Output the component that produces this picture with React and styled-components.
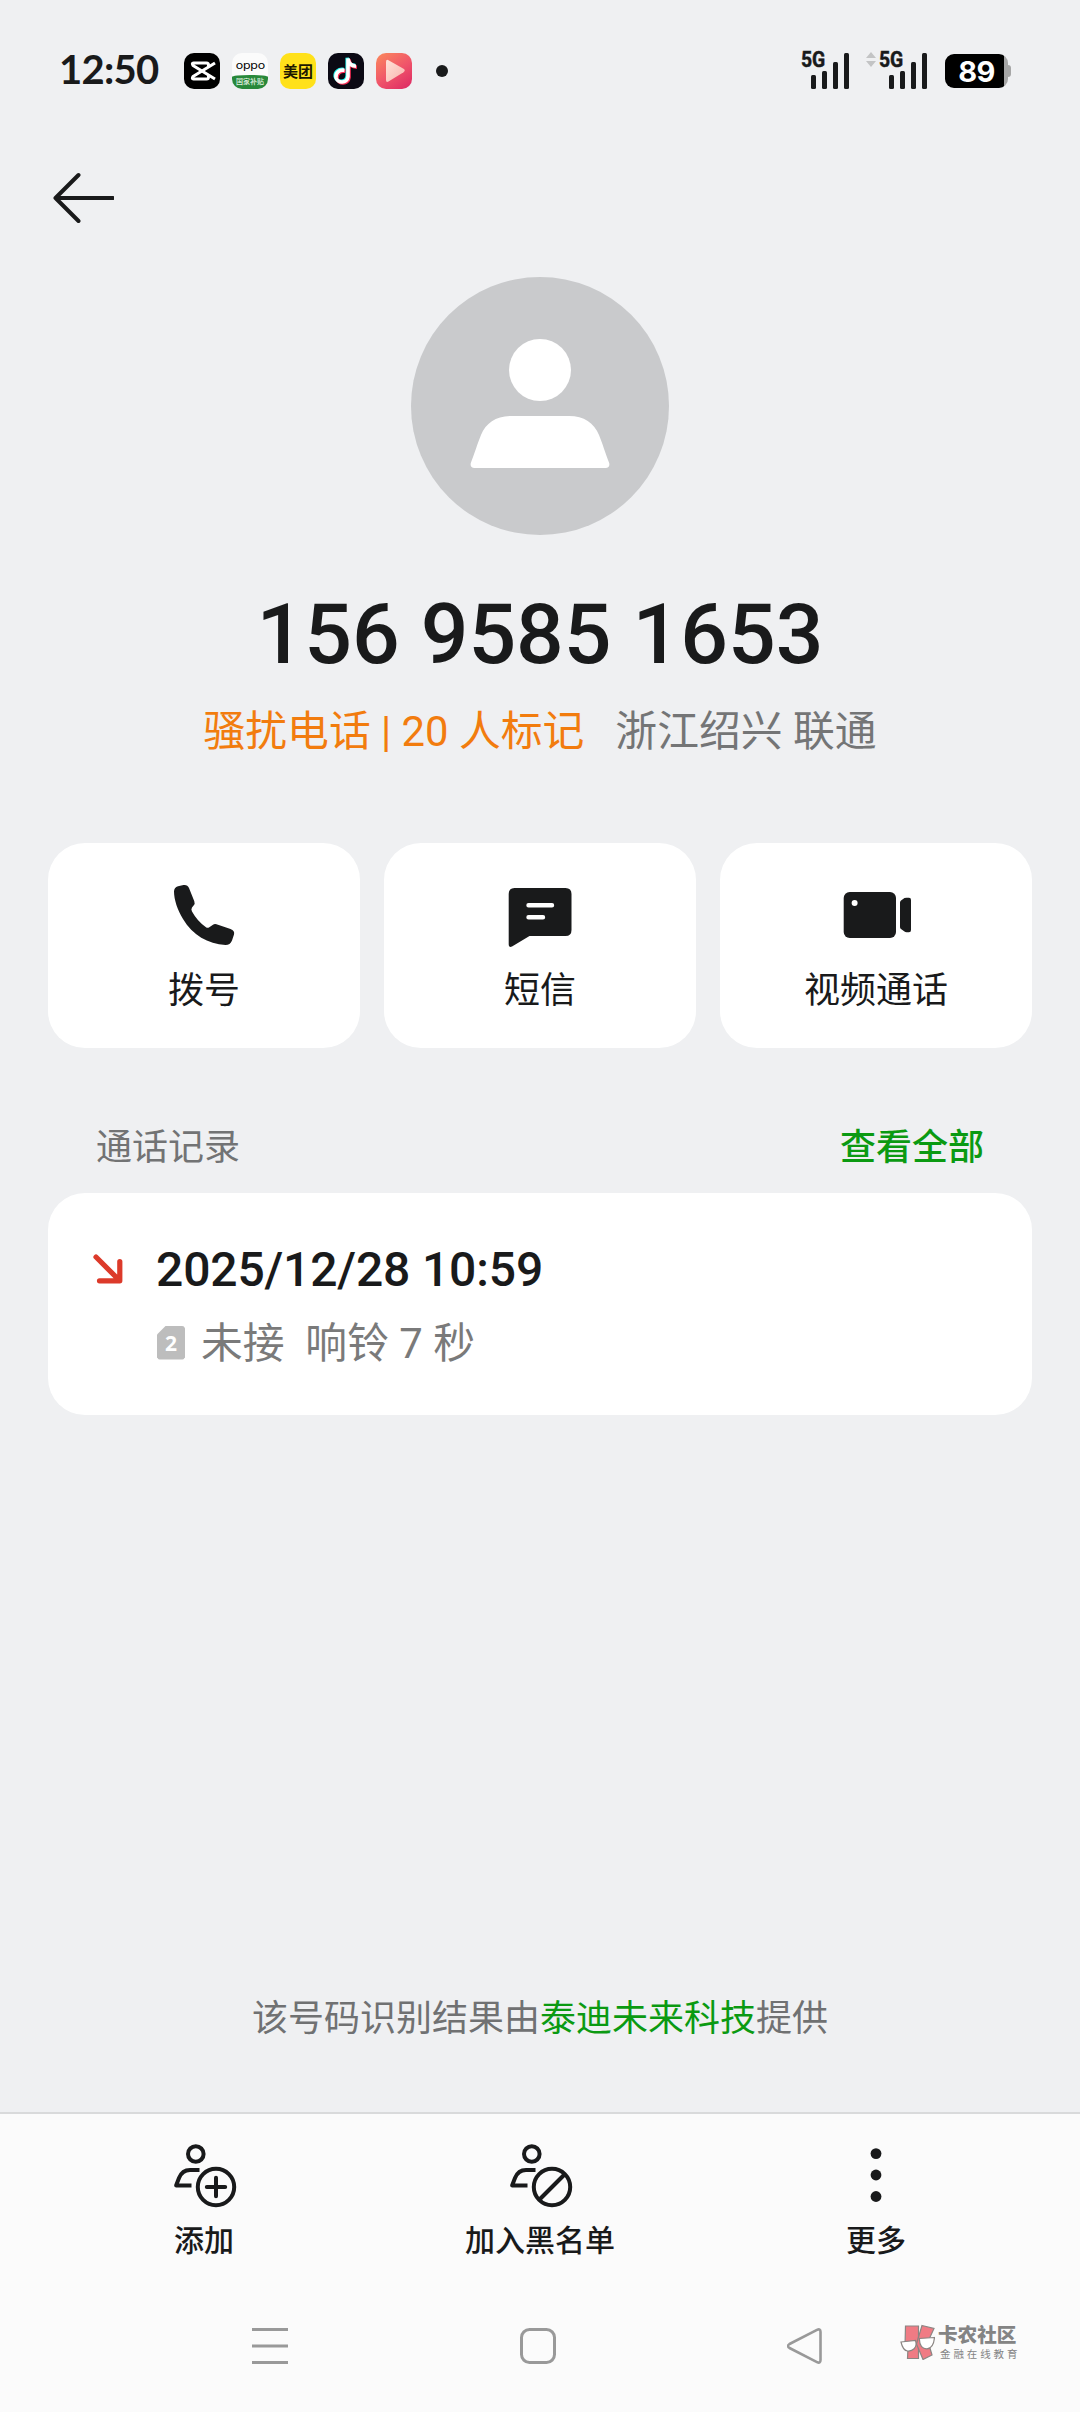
import React from "react";
import styled, { createGlobalStyle } from "styled-components";

const ink = "#191a1b";

const GlobalStyle = createGlobalStyle`
  * { box-sizing: border-box; }
  body {
    margin: 0;
    background: #eff0f2;
    font-family: Roboto, "Noto Sans CJK SC", sans-serif;
    color: ${ink};
  }
  svg { display: block; flex: none; }
`;

const Screen = styled.div`
  width: 1080px;
  height: 2412px;
  display: flex;
  flex-direction: column;
  background: #eff0f2;
  overflow: hidden;
`;

const StatusBar = styled.header`
  height: 142px;
  padding: 0 69px 0 59px;
  display: flex;
  justify-content: space-between;
  align-items: center;
`;

const StatusGroup = styled.div`
  display: flex;
  align-items: center;
`;

const Clock = styled.span`
  width: 125px;
  padding-bottom: 4px;
  font: 700 40px/48px Lato, sans-serif;
  letter-spacing: -0.7px;
  white-space: nowrap;
`;

const AppIcons = styled.div`
  display: flex;
  gap: 12px;
  margin-right: 24px;
`;

const AppIcon = styled.div`
  width: 36px;
  height: 36px;
  border-radius: 10px;
  overflow: hidden;
  background: ${(p) => p.$bg};
  display: flex;
  flex-direction: column;
  align-items: center;
  justify-content: center;
`;

const OppoName = styled.span`
  height: 22px;
  padding-top: 5px;
  font: 400 10.5px/16px Inter, sans-serif;
  letter-spacing: -0.2px;
  transform: scaleX(1.18);
  color: #000;
`;

const OppoBand = styled.span`
  width: 36px;
  height: 14px;
  background: #28883a;
  border-radius: 50% 50% 0 0 / 2px 2px 0 0;
  color: #e3f3e4;
  font: 500 7px/12px "Noto Sans CJK SC", sans-serif;
  text-align: center;
  white-space: nowrap;
`;

const MeituanName = styled.span`
  font: 700 15px/18px "Noto Sans CJK SC", sans-serif;
  color: #1b1700;
  white-space: nowrap;
`;

const MoreDot = styled.i`
  width: 12px;
  height: 12px;
  border-radius: 50%;
  background: ${ink};
`;

const Signal = styled.div`
  display: flex;
  align-items: flex-start;
  height: 38px;
  margin-right: ${(p) => p.$after}px;
`;

const Network = styled.span`
  width: 22px;
  height: 16px;
  font: 700 22px/15px Roboto, sans-serif;
  -webkit-text-stroke: 0.5px ${ink};
  transform: scaleX(0.88);
  transform-origin: left;
  white-space: nowrap;
  margin-right: -12px;
`;

const Bars = styled.div`
  height: 37px;
  padding-top: 1px;
  display: flex;
  align-items: flex-end;
  gap: 5.6px;
`;

const Bar = styled.i`
  width: 5.3px;
  height: ${(p) => p.$h}px;
  border-radius: 1.5px;
  background: ${ink};
`;

const Traffic = styled.svg`
  margin: 0 3px 0 0;
`;

const Battery = styled.div`
  width: 63px;
  height: 34px;
  border-radius: 9px;
  background: linear-gradient(90deg, #000 59px, #a6a6a6 59px);
  color: #fff;
  font: 700 29px/35px Inter, sans-serif;
  letter-spacing: -0.7px;
  text-align: center;
`;

const BatteryTip = styled.i`
  width: 3px;
  height: 12px;
  border-radius: 0 3px 3px 0;
  background: #a6a6a6;
`;

const BackButton = styled.div`
  height: 112px;
  padding: 0 0 0 52px;
  display: flex;
  align-items: center;
`;

const Profile = styled.section`
  display: flex;
  flex-direction: column;
  align-items: center;
  padding-top: 23px;
`;

const PhoneNumber = styled.h1`
  margin: 50px 0 0;
  font-size: 84px;
  line-height: 100px;
  font-weight: 500;
  white-space: nowrap;
`;

const Caption = styled.p`
  margin: 22px 0 0;
  display: flex;
  gap: 31px;
  font-size: 41.8px;
  line-height: 50px;
  white-space: nowrap;
`;

const Tone = styled.span`
  color: ${(p) => p.$color};
  font-weight: ${(p) => p.$weight || 400};
`;

const Actions = styled.div`
  display: grid;
  grid-template-columns: repeat(3, 1fr);
  gap: 24px;
  padding: 0 48px;
  margin-top: 86px;
`;

const ActionCard = styled.div`
  height: 205px;
  border-radius: 37px;
  background: #fff;
  display: flex;
  flex-direction: column;
  align-items: center;
  padding-top: 36px;
  gap: 16px;
  font-size: 36px;
  line-height: 48px;
`;

const SectionHead = styled.div`
  display: flex;
  justify-content: space-between;
  padding: 0 96px;
  margin-top: 76px;
  font-size: 36px;
  line-height: 48px;
`;

const RecordCard = styled.div`
  margin: 21px 48px 0;
  height: 222px;
  border-radius: 37px;
  background: #fff;
  padding: 47px 0 0 45px;
  display: flex;
  gap: 34px;
`;

const RecordArrow = styled.svg`
  margin-top: 14px;
`;

const RecordBody = styled.div`
  display: flex;
  flex-direction: column;
  gap: 19px;
`;

const RecordTime = styled.div`
  font-size: 48px;
  line-height: 60px;
  font-weight: 500;
  letter-spacing: -0.15px;
  margin-left: -1px;
`;

const RecordDetail = styled.div`
  display: flex;
  align-items: center;
  gap: 16px;
  font-size: 41.8px;
  line-height: 50px;
  color: #7a7a7a;
  white-space: pre;
`;

const SimBadge = styled.span`
  width: 28px;
  height: 34px;
  margin-bottom: 3px;
  background: #bdbdbd;
  clip-path: polygon(9px 0, 94% 0, 100% 6%, 100% 94%, 94% 100%, 6% 100%, 0 94%, 0 9px);
  border-radius: 3px;
  color: #fff;
  font: 700 21px/35px "Open Sans", sans-serif;
  text-align: center;
`;

const Source = styled.p`
  margin: auto 0 69px;
  text-align: center;
  font-size: 36px;
  line-height: 48px;
  color: #707172;
`;

const Toolbar = styled.footer`
  height: 184px;
  border-top: 2px solid #d9dadb;
  background: #fbfbfb;
  padding: 28px 48px 0;
  display: grid;
  grid-template-columns: repeat(3, 1fr);
  column-gap: 24px;
`;

const Tool = styled.div`
  display: flex;
  flex-direction: column;
  align-items: center;
  gap: 15px;
  font-size: 30px;
  line-height: 36px;
  font-weight: 500;
`;

const NavBar = styled.nav`
  position: relative;
  height: 116px;
  background: #fbfbfb;
  padding: 31px 0 0 251px;
  display: flex;
  align-items: flex-start;
  gap: 230px;
`;

const Watermark = styled.div`
  position: absolute;
  left: 900px;
  top: 27px;
  display: flex;
  align-items: center;
  gap: 3px;
`;

const Brand = styled.div`
  display: flex;
  flex-direction: column;
  color: #848484;
  white-space: nowrap;
`;

const BrandName = styled.span`
  font: 900 19.6px/22px "Noto Sans CJK SC", sans-serif;
`;

const BrandLine = styled.span`
  margin: 2px 0 0 2px;
  font: 400 10.5px/13px "Noto Sans CJK SC", sans-serif;
  letter-spacing: 2.9px;
`;

const notePath =
  "M16.500 17.300C11 16.500 7.500 20 8 24.300C9 30.500 19.300 31 20 23.500V5.500C20.500 10 23.500 13 28 13.200";

function SignalMeter({ traffic, after }) {
  return (
    <Signal $after={after}>
      {traffic && (
        <Traffic width="10" height="15" viewBox="0 0 10 15" fill="#c3c4c5">
          <path d="M5 0l5 6H0zM5 15l5-6H0z" />
        </Traffic>
      )}
      <Network>5G</Network>
      <Bars>
        {[14, 18, 27, 36].map((h) => (
          <Bar key={h} $h={h} />
        ))}
      </Bars>
    </Signal>
  );
}

function PersonPart() {
  return (
    <>
      <circle cx="24.3" cy="12" r="7.8" />
      <path d="M28 28H18.500C12.500 28 9.500 31 7.500 36L4.600 43.500H20" strokeLinejoin="round" />
    </>
  );
}

export default function App() {
  return (
    <>
      <GlobalStyle />
      <Screen>
        <StatusBar>
          <StatusGroup>
            <Clock>12:50</Clock>
            <AppIcons>
              <AppIcon $bg="#000">
                <svg width="36" height="36" viewBox="0 0 36 36" fill="none" stroke="#fff" strokeWidth="3" strokeLinejoin="round">
                  <path d="M31 10L9 23.500Q7.500 26 9.500 26H22.500Q24.500 26 24.500 24V23" />
                  <path d="M31 26L9 12.500Q7.500 10 9.500 10H22.500Q24.500 10 24.500 12V13" />
                </svg>
              </AppIcon>
              <AppIcon $bg="#fbfbfb">
                <OppoName>oppo</OppoName>
                <OppoBand>国家补贴</OppoBand>
              </AppIcon>
              <AppIcon $bg="#ffe11a">
                <MeituanName>美团</MeituanName>
              </AppIcon>
              <AppIcon $bg="#0b0914">
                <svg width="36" height="36" viewBox="0 0 36 36" fill="none" strokeWidth="3.6">
                  <path d={notePath} stroke="#25f4ee" transform="translate(-.8 -.8)" />
                  <path d={notePath} stroke="#fe2c55" transform="translate(1 1)" />
                  <path d={notePath} stroke="#fff" />
                </svg>
              </AppIcon>
              <AppIcon $bg="linear-gradient(145deg,#fb8a5c,#f0556a 52%,#dc2763)">
                <svg width="36" height="36" viewBox="0 0 36 36">
                  <defs>
                    <linearGradient id="play" x1="0" y1="0" x2="1" y2="1">
                      <stop offset="0" stopColor="#ffe3d8" />
                      <stop offset="1" stopColor="#f9b4ae" />
                    </linearGradient>
                  </defs>
                  <path d="M10 9Q10 6 12.500 7.200L27.500 15.800Q30 17.500 27.500 19.200L12.500 28.500Q10 29.800 10 27Z" fill="url(#play)" />
                </svg>
              </AppIcon>
            </AppIcons>
            <MoreDot />
          </StatusGroup>
          <StatusGroup>
            <SignalMeter after={17} />
            <SignalMeter traffic after={18} />
            <Battery>89</Battery>
            <BatteryTip />
          </StatusGroup>
        </StatusBar>

        <BackButton>
          <svg width="62" height="52" viewBox="0 0 62 52" fill="none" stroke={ink} strokeWidth="4" strokeLinecap="round" strokeLinejoin="round">
            <path d="M61 26H3.500M26.500 3L3.500 26L26.500 49" />
          </svg>
        </BackButton>

        <Profile>
          <svg width="258" height="258" viewBox="0 0 258 258">
            <circle cx="129" cy="129" r="129" fill="#c9cacc" />
            <circle cx="129" cy="93" r="31" fill="#fff" />
            <path d="M100 139H158C173 139 183 146 188 158C191 165 195 178 198.200 186Q199.200 191 194.500 191H63.500Q58.800 191 59.800 186C63 178 67 165 70 158C75 146 85 139 100 139Z" fill="#fff" />
          </svg>
          <PhoneNumber>156 9585 1653</PhoneNumber>
          <Caption>
            <Tone $color="#f27c0e">骚扰电话 | 20 人标记</Tone>
            <Tone $color="#747576">浙江绍兴 联通</Tone>
          </Caption>
        </Profile>

        <Actions>
          <ActionCard>
            <svg width="72" height="72" viewBox="0 0 72 72" fill={ink}>
              <path d="M10 7.300L15.500 6Q19.500 5.400 21 9L26.300 22.300Q27.200 24.800 25.800 26.300L24 28.600Q22.800 30.500 24 32.500Q29.500 42.500 38 48.200Q39.500 49.200 41.300 48.200L45 45.700Q46.500 44.700 48.500 45.300L62.500 50Q67 51.500 66 55.500L64 61.500Q62.200 66 57.500 66C40 65 24.500 56 15 40C9.500 31 6 20.500 6 12.500Q6 8.500 10 7.300Z" />
            </svg>
            拨号
          </ActionCard>
          <ActionCard>
            <svg width="72" height="72" viewBox="0 0 72 72">
              <path d="M10.500 9H61.500Q67.500 9 67.500 15V51Q67.500 57 61.500 57H25.500L8 67.500Q4.700 69 4.700 65.500V15Q4.700 9 10.500 9Z" fill={ink} />
              <path d="M24.500 26.300H48M24.500 38.300H39" stroke="#fff" strokeWidth="4.400" strokeLinecap="round" />
            </svg>
            短信
          </ActionCard>
          <ActionCard>
            <svg width="72" height="72" viewBox="0 0 72 72" fill={ink}>
              <rect x="3.700" y="13" width="52.300" height="46" rx="6" />
              <path d="M60 23.500Q60 22.300 61 21.500L64.500 19Q65.300 18.800 66.500 18.800H69Q71 18.800 71 21V51Q71 53.200 69 53.200H66.500Q65.300 53.200 64.500 52.500L61 50Q60 49.300 60 48Z" />
              <circle cx="14.600" cy="24" r="3" fill="#fff" />
            </svg>
            视频通话
          </ActionCard>
        </Actions>

        <SectionHead>
          <Tone $color="#727374">通话记录</Tone>
          <Tone $color="#0b9a12" $weight={500}>查看全部</Tone>
        </SectionHead>

        <RecordCard>
          <RecordArrow width="30" height="30" viewBox="0 0 30 30" fill="none" stroke="#dc3a2a" strokeWidth="5.200" strokeLinecap="round" strokeLinejoin="round">
            <path d="M3 3L26 26M6.500 26.800H26.800V7.500" />
          </RecordArrow>
          <RecordBody>
            <RecordTime>2025/12/28 10:59</RecordTime>
            <RecordDetail>
              <SimBadge>2</SimBadge>
              <span>{"未接  响铃 7 秒"}</span>
            </RecordDetail>
          </RecordBody>
        </RecordCard>

        <Source>
          该号码识别结果由<Tone $color="#0b9a12">泰迪未来科技</Tone>提供
        </Source>

        <Toolbar>
          <Tool>
            <svg width="72" height="66" viewBox="0 0 72 66" fill="none" stroke={ink} strokeWidth="4">
              <g transform="translate(3.500 0)"><PersonPart /></g>
              <circle cx="48" cy="45" r="18.200" />
              <path d="M38.800 45H57.200M48 35.800V54.200" strokeLinecap="round" />
            </svg>
            添加
          </Tool>
          <Tool>
            <svg width="72" height="66" viewBox="0 0 72 66" fill="none" stroke={ink} strokeWidth="4">
              <g transform="translate(3.500 0)"><PersonPart /></g>
              <circle cx="48" cy="45" r="18.200" />
              <path d="M36 57L60 33" />
            </svg>
            加入黑名单
          </Tool>
          <Tool>
            <svg width="72" height="66" viewBox="0 0 72 66" fill={ink}>
              <circle cx="36" cy="11.600" r="5.400" />
              <circle cx="36" cy="33" r="5.400" />
              <circle cx="36" cy="54.500" r="5.400" />
            </svg>
            更多
          </Tool>
        </Toolbar>

        <NavBar>
          <svg width="38" height="38" viewBox="0 0 38 38" stroke="#999" strokeWidth="3">
            <path d="M1 2.500H37M1 19H37M1 35.500H37" />
          </svg>
          <svg width="38" height="38" viewBox="0 0 38 38" fill="none" stroke="#999" strokeWidth="3">
            <rect x="2.500" y="2.500" width="33" height="33" rx="8" />
          </svg>
          <svg width="38" height="38" viewBox="0 0 38 38" fill="none" stroke="#999" strokeWidth="2.600" strokeLinejoin="round">
            <path d="M30 2.900Q33.500 1.200 33.500 5V33Q33.500 36.800 30 35.100L2.500 21Q-.5 19 2.500 17Z" />
          </svg>
          <Watermark>
            <svg width="35" height="36" viewBox="0 0 35 36" stroke="#8b8583" strokeWidth="1.200">
              <path d="M5.500 2H18.500V34.500H7.500L8 24L5 22Z" fill="#f07b84" />
              <path d="M22 1.500L34 4.500L28 17.500L32 31L23 35.500L16.500 20L18.500 13Z" fill="#f07b84" />
              <path d="M1 18L15.500 16.500C18 24 12 27.500 7.500 27C3.500 26.500 2 22.500 1 18Z" fill="#fff" />
              <path d="M34.500 13.500L19.500 14.500C19 22 23 25 27 24.800C32 24.500 34 19 34.500 13.500Z" fill="#fff" />
            </svg>
            <Brand>
              <BrandName>卡农社区</BrandName>
              <BrandLine>金融在线教育</BrandLine>
            </Brand>
          </Watermark>
        </NavBar>
      </Screen>
    </>
  );
}
